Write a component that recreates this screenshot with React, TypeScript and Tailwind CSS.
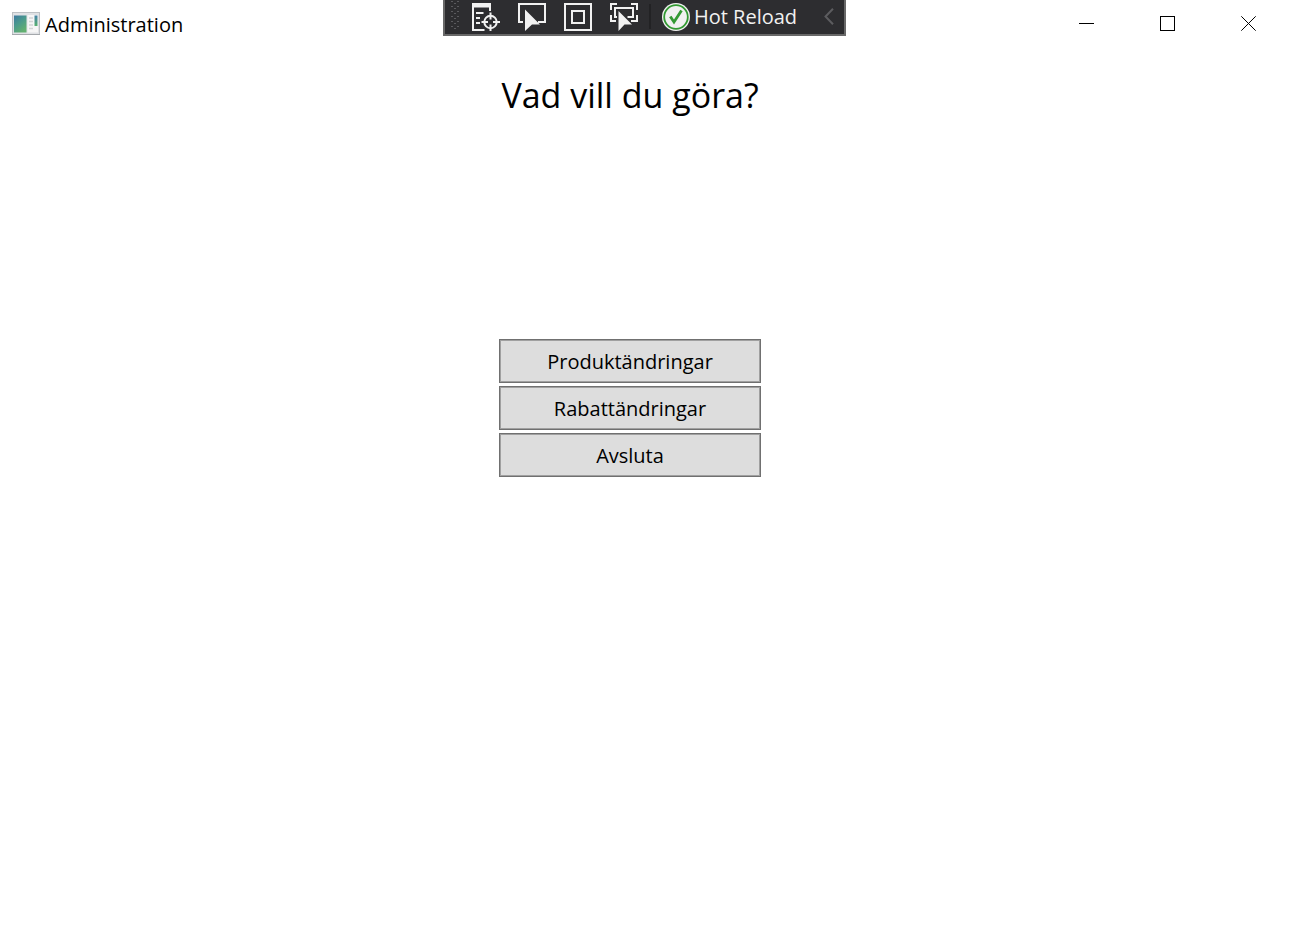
import React from "react";

function AppIcon() {
  return (
    <svg width="28" height="24" viewBox="0 0 28 24" aria-hidden="true">
      <defs>
        <linearGradient id="pane" x1="0" y1="0" x2="0.6" y2="1">
          <stop offset="0" stopColor="#3c78a0" />
          <stop offset="0.5" stopColor="#4a9a8c" />
          <stop offset="1" stopColor="#62b070" />
        </linearGradient>
        <linearGradient id="strip" x1="0" y1="0" x2="0" y2="1">
          <stop offset="0" stopColor="#4682a8" />
          <stop offset="1" stopColor="#58b070" />
        </linearGradient>
      </defs>
      <rect x="0.5" y="0.5" width="27" height="22" fill="#dfe1e4" stroke="#bcc0c4" />
      <path d="M0 22.5H28" stroke="#a4a8ac" />
      <rect x="2" y="3.5" width="12.5" height="17" fill="url(#pane)" />
      <rect x="15.5" y="3" width="10.5" height="17.5" fill="#f6f6f6" />
      <path d="M17 6H21M17 9.5H21M17 13H21M17 16.5H21" stroke="#d2d4d6" strokeWidth="1.5" />
      <rect x="22.5" y="3.5" width="3" height="10.5" fill="url(#strip)" />
    </svg>
  );
}

function Grip() {
  return (
    <svg width="10" height="32" viewBox="0 0 10 32" aria-hidden="true">
      <defs>
        <pattern id="dots" width="6" height="5" patternUnits="userSpaceOnUse">
          <rect x="0" y="1" width="2" height="1" fill="#5a5a5e" />
          <rect x="3" y="3" width="2" height="1" fill="#5a5a5e" />
        </pattern>
      </defs>
      <rect width="9" height="31" fill="url(#dots)" />
    </svg>
  );
}

function LiveTreeIcon() {
  return (
    <svg width="28" height="28" viewBox="0 0 28 28" fill="none" stroke="#f1f1f1" aria-hidden="true">
      <rect width="19" height="4.5" fill="#f1f1f1" stroke="none" />
      <path d="M1 3V27H12.5M18 4V8" strokeWidth="2" />
      <path d="M4 10H11.5M4 15H8M4 20H8" strokeWidth="2" />
      <circle cx="18.5" cy="19" r="6.2" strokeWidth="2" />
      <path d="M18.5 9.5V16.5M18.5 21.5V28M9.5 19H16M21 19H28" strokeWidth="2" />
    </svg>
  );
}

function SelectIcon() {
  return (
    <svg width="28" height="28" viewBox="0 0 28 28" fill="none" aria-hidden="true">
      <path d="M5 19H1V1H27V19H20" stroke="#f1f1f1" strokeWidth="2" />
      <path d="M7 6.5L22 21.5H14L7 28Z" fill="#f1f1f1" />
    </svg>
  );
}

function LayoutIcon() {
  return (
    <svg width="28" height="28" viewBox="0 0 28 28" fill="none" stroke="#f1f1f1" strokeWidth="2" aria-hidden="true">
      <rect x="1" y="1" width="26" height="26" />
      <rect x="8" y="8" width="12" height="12" />
    </svg>
  );
}

function TrackFocusIcon() {
  return (
    <svg width="28" height="28" viewBox="0 0 28 28" fill="none" aria-hidden="true">
      <path d="M1 7V1H7M21 1H27V7M27 12V18H21M6 18H1V12" stroke="#f1f1f1" strokeWidth="2" />
      <path d="M7 14H5V5H23V14H17.5" stroke="#f1f1f1" strokeWidth="2" />
      <path d="M8.5 8L22 21.5H14.5L8.5 28Z" fill="#f1f1f1" stroke="#2d2d30" strokeWidth="1" paintOrder="stroke" />
    </svg>
  );
}

function CheckIcon() {
  return (
    <svg width="28" height="28" viewBox="0 0 28 28" fill="none" aria-hidden="true">
      <circle cx="14" cy="14" r="14" fill="#f1f1f1" />
      <circle cx="14" cy="14" r="11.8" stroke="#339933" strokeWidth="1.8" />
      <path d="M8.3 13.5L12 19L19.5 7.5" stroke="#339933" strokeWidth="2.8" />
    </svg>
  );
}

const tools = [
  { label: "Live Visual Tree", Icon: LiveTreeIcon },
  { label: "Select Element", Icon: SelectIcon },
  { label: "Display Layout Adorners", Icon: LayoutIcon },
  { label: "Track Focused Element", Icon: TrackFocusIcon },
];

const actions = ["Produktändringar", "Rabattändringar", "Avsluta"];

function DebugToolbar() {
  return (
    <div className="pointer-events-none absolute inset-x-0 top-0 flex justify-center">
      <div
        role="toolbar"
        aria-label="Debug"
        className="pointer-events-auto flex h-9 w-[403px] items-start border-x-2 border-b-2 border-[#686868] bg-[#2d2d30] text-[#f1f1f1]"
      >
        <div className="ml-1.5 shrink-0">
          <Grip />
        </div>
        <div className="mt-[3px] ml-[11px] flex shrink-0 gap-[18px]">
          {tools.map(({ label, Icon }) => (
            <button key={label} type="button" aria-label={label}>
              <Icon />
            </button>
          ))}
        </div>
        <div className="mt-1 ml-[11px] h-[25px] w-0.5 shrink-0 bg-[#222224]" />
        <button type="button" className="mt-0.5 ml-[11px] flex shrink-0 items-center gap-1 text-xl leading-7">
          <CheckIcon />
          <span className="pt-px">Hot Reload</span>
        </button>
        <button type="button" aria-label="Collapse" className="mt-2 mr-2.5 ml-auto">
          <svg width="10" height="17" viewBox="0 0 10 17" fill="none" stroke="#5c5c5f" strokeWidth="2" aria-hidden="true">
            <path d="M9 0.7L1.5 8.5L9 16.3" />
          </svg>
        </button>
      </div>
    </div>
  );
}

export default function App() {
  return (
    <div className="relative min-h-screen bg-white font-['Open_Sans','Noto_Sans',sans-serif] font-[370] text-black">
      <header className="flex h-[47px] items-center justify-between pl-3">
        <div className="flex items-center gap-[5px]">
          <AppIcon />
          <span className="pt-0.5 text-xl">Administration</span>
        </div>
        <div className="flex h-full">
          <button type="button" aria-label="Minimize" className="flex h-full w-[81px] items-center justify-center">
            <svg width="15" height="15" viewBox="0 0 15 15" stroke="#000" aria-hidden="true">
              <path d="M0 7.5H15" />
            </svg>
          </button>
          <button type="button" aria-label="Maximize" className="flex h-full w-[81px] items-center justify-center">
            <svg width="15" height="15" viewBox="0 0 15 15" fill="none" stroke="#000" aria-hidden="true">
              <rect x="0.5" y="0.5" width="14" height="14" />
            </svg>
          </button>
          <button type="button" aria-label="Close" className="flex h-full w-[81px] items-center justify-center">
            <svg width="15" height="15" viewBox="0 0 15 15" stroke="#000" aria-hidden="true">
              <path d="M0.3 0.3L14.7 14.7M14.7 0.3L0.3 14.7" />
            </svg>
          </button>
        </div>
      </header>
      <DebugToolbar />
      <main className="flex flex-col items-center pt-6 pr-[29px]">
        <h1 className="text-[34px] leading-12 font-[370]">Vad vill du göra?</h1>
        <div className="mt-[220px] flex w-[262px] flex-col gap-[3px]">
          {actions.map((label) => (
            <button
              key={label}
              type="button"
              className="h-11 border border-[#707070] bg-[#dddddd] pt-0.5 text-xl leading-none shadow-[inset_0_0_0_1px_#a0a0a0]"
            >
              {label}
            </button>
          ))}
        </div>
      </main>
    </div>
  );
}
